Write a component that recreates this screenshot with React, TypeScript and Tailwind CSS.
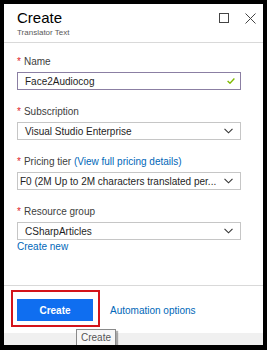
import React from 'react';

const font = { fontFamily: '"Liberation Sans", Arial, sans-serif' };

function Chevron() {
  return (
    <svg width="9" height="6" viewBox="0 0 9 6" className="shrink-0">
      <polyline points="0.5,0.8 4.5,4.8 8.5,0.8" fill="none" stroke="#333" strokeWidth="1.1" />
    </svg>
  );
}

function Label({ children }: { children: React.ReactNode }) {
  return (
    <div className="h-[12px] leading-[12px] text-[10px] text-[#404040] mb-[4px] whitespace-nowrap">
      <span className="text-[#e0212b] mr-[3px]">*</span>
      {children}
    </div>
  );
}

function Select({ value, tight }: { value: string; tight?: boolean }) {
  return (
    <div className="h-[18px] w-[224px] border border-[#c6c6c6] flex items-center pr-[7px] text-[10px] text-[#1e1e1e]">
      <span className={'flex-1 overflow-hidden whitespace-nowrap ' + (tight ? 'pl-[2px]' : 'pl-[7px]')}>{value}</span>
      <Chevron />
    </div>
  );
}

export default function App() {
  return (
    <div className="w-[267px] h-[350px] bg-black pt-[4px] pl-[4px] pr-[4px] pb-[5px]" style={font}>
      <div className="h-full bg-white flex flex-col relative overflow-hidden">
        {/* header */}
        <div className="h-[39px] border-b border-[#d9d9d9] flex justify-between pl-[13px] pr-[7px] pt-[5px] shrink-0">
          <div>
            <div className="text-[15px] leading-[18px] text-black">Create</div>
            <div className="text-[8px] leading-[10px] text-[#595959] mt-[1px]">Translator Text</div>
          </div>
          <div className="flex gap-[16px] pt-[4px]">
            <div className="w-[10px] h-[10px] border border-[#444]" />
            <svg width="11" height="11" viewBox="0 0 11 11">
              <path d="M0.5 0.5 L10.5 10.5 M10.5 0.5 L0.5 10.5" stroke="#444" strokeWidth="1" />
            </svg>
          </div>
        </div>

        {/* body */}
        <div className="flex-1 pl-[13px] pt-[13px] flex flex-col gap-[16px]">
          <div>
            <Label>Name</Label>
            <div className="h-[18px] w-[224px] border border-[#8b7fa3] flex items-center pl-[7px] pr-[5px] text-[10px] text-[#1e1e1e]">
              <span className="flex-1">Face2Audiocog</span>
              <svg width="8" height="6" viewBox="0 0 8 6">
                <polyline points="0.6,3 3,5.2 7.4,0.6" fill="none" stroke="#7fba00" strokeWidth="1.4" />
              </svg>
            </div>
          </div>
          <div>
            <Label>Subscription</Label>
            <Select value="Visual Studio Enterprise" />
          </div>
          <div>
            <Label>
              Pricing tier <span className="text-[#0067b8]">(View full pricing details)</span>
            </Label>
            <Select value="F0 (2M Up to 2M characters translated per..." tight />
          </div>
          <div>
            <Label>Resource group</Label>
            <Select value="CSharpArticles" />
            <div className="text-[10px] leading-[12px] text-[#0067b8] mt-[1px]">Create new</div>
          </div>
        </div>

        {/* footer */}
        <div className="h-[48px] border-t border-[#d9d9d9] pt-[4px] pl-[7px] flex items-start shrink-0">
          <div className="border-2 border-[#d3131b] pt-[7px] pb-[4px] pl-[4px] pr-[5px]">
            <div className="w-[76px] h-[22px] bg-[#0f6ef0] text-white text-[10px] font-bold flex items-center justify-center">
              Create
            </div>
          </div>
          <div className="ml-[10px] mt-[15px] text-[10px] leading-[12px] text-[#0067b8]">Automation options</div>
        </div>
        <div className="h-[12px] bg-[#f0f0f0] shrink-0" />

        {/* tooltip */}
        <div className="absolute left-[72px] top-[325px] h-[18px] px-[4px] bg-[#f7f7f7] border border-[#8a8a8a] text-[10px] leading-[16px] text-[#555] shadow-[2px_2px_1px_rgba(0,0,0,0.3)]">
          Create
        </div>
      </div>
    </div>
  );
}
